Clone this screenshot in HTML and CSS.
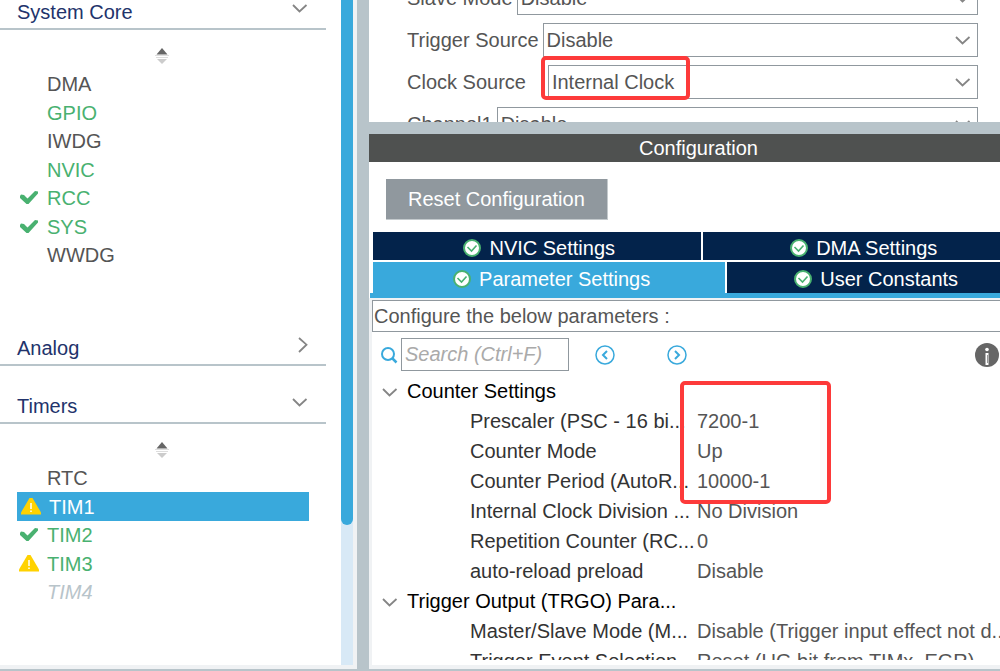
FILE: index.html
```html
<!DOCTYPE html>
<html lang="en">
<head>
    <meta charset="UTF-8">
    <meta name="viewport" content="width=device-width, initial-scale=1.0">
    <title>TIM1 Mode and Configuration</title>
    <link rel="stylesheet" href="styles.css">
</head>
<body>
    <!-- shared icons -->
    <svg class="sprite" width="0" height="0">
        <symbol id="down" viewBox="0 0 16 10">
            <path d="M1 1l6.500 6.500L14.500 1" fill="none" stroke="#858585" stroke-width="1.800"/>
        </symbol>
        <symbol id="right" viewBox="0 0 10 16">
            <path d="M1 1l7.500 6.700L1 15" fill="none" stroke="#858585" stroke-width="1.800"/>
        </symbol>
        <symbol id="sort" viewBox="0 0 14 16">
            <path d="M7 0l5.500 6.500h-11z" fill="#666"/>
            <path d="M0 7.500h14M1 9.500h12" stroke="#ddd"/>
            <path d="M7 16l5-5H2z" fill="#ccc"/>
        </symbol>
        <symbol id="check" viewBox="0 0 20 16">
            <path d="M1 6l1-1.500 3 .5 3.500 3.500L16 1l3 .5v2L9.500 14h-2L1 8z" fill="#49b170"/>
        </symbol>
        <symbol id="warn" viewBox="0 0 20 17">
            <path d="M8.500 0h3l8.500 14.500v2H0v-2z" fill="#ffd200"/>
            <path d="M10 5v6M10 12.500v1.500" stroke="#fff" stroke-width="1.500"/>
        </symbol>
        <symbol id="ok" viewBox="0 0 18 18">
            <circle cx="9" cy="9" r="8" fill="#fff" stroke="#49b170" stroke-width="2"/>
            <path d="M4.500 8l4 4 5-5.500" fill="none" stroke="#49b170" stroke-width="1.600"/>
        </symbol>
    </svg>

    <div class="page">
        <aside class="sidebar">
            <nav class="menu">
                <button class="section">System Core <svg width="16" height="10"><use href="#down"/></svg></button>
                <svg class="sort" width="14" height="16"><use href="#sort"/></svg>
                <ul class="list">
                    <li><a href="#">DMA</a></li>
                    <li><a href="#" class="green">GPIO</a></li>
                    <li><a href="#">IWDG</a></li>
                    <li><a href="#" class="green">NVIC</a></li>
                    <li><a href="#" class="green"><svg width="20" height="16"><use href="#check"/></svg>RCC</a></li>
                    <li><a href="#" class="green"><svg width="20" height="16"><use href="#check"/></svg>SYS</a></li>
                    <li><a href="#">WWDG</a></li>
                </ul>
                <button class="section analog">Analog <svg width="10" height="16"><use href="#right"/></svg></button>
                <button class="section timers">Timers <svg width="16" height="10"><use href="#down"/></svg></button>
                <svg class="sort" width="14" height="16"><use href="#sort"/></svg>
                <ul class="list">
                    <li><a href="#">RTC</a></li>
                    <li><a href="#" class="selected"><svg width="20" height="17"><use href="#warn"/></svg>TIM1</a></li>
                    <li><a href="#" class="green"><svg width="20" height="16"><use href="#check"/></svg>TIM2</a></li>
                    <li><a href="#" class="green"><svg width="20" height="17"><use href="#warn"/></svg>TIM3</a></li>
                    <li><a href="#" class="off">TIM4</a></li>
                </ul>
            </nav>
            <div class="scrollbar"><div class="thumb"></div></div>
        </aside>

        <main class="main">
            <section class="mode">
                <div class="field">
                    <label for="slave">Slave Mode</label>
                    <div class="combo"><select id="slave"><option>Disable</option></select></div>
                </div>
                <div class="field">
                    <label for="trigger">Trigger Source</label>
                    <div class="combo"><select id="trigger"><option>Disable</option></select></div>
                </div>
                <div class="field">
                    <label for="clock" class="spaced">Clock Source</label>
                    <div class="combo">
                        <select id="clock"><option>Internal Clock</option></select>
                        <div class="mark mark-clock"></div>
                    </div>
                </div>
                <div class="field">
                    <label for="channel1">Channel1</label>
                    <div class="combo"><select id="channel1"><option>Disable</option></select></div>
                </div>
            </section>

            <section class="config">
                <h2>Configuration</h2>
                <button class="reset">Reset Configuration</button>
                <div class="tabs">
                    <div class="tab-row">
                        <button class="tab"><svg width="18" height="18"><use href="#ok"/></svg>NVIC Settings</button>
                        <button class="tab"><svg width="18" height="18"><use href="#ok"/></svg>DMA Settings</button>
                    </div>
                    <div class="tab-row second">
                        <button class="tab active"><svg width="18" height="18"><use href="#ok"/></svg>Parameter Settings</button>
                        <button class="tab"><svg width="18" height="18"><use href="#ok"/></svg>User Constants</button>
                    </div>
                </div>
                <div class="content">
                    <p class="hint">Configure the below parameters :</p>
                    <div class="tools">
                        <label for="search" aria-label="Search">
                            <svg width="18" height="18" viewBox="0 0 18 18" fill="none" stroke="#39a9dc">
                                <circle cx="8" cy="8" r="6" stroke-width="2"/>
                                <path d="M12 12l4.500 4.500" stroke-width="2.500"/>
                            </svg>
                        </label>
                        <input type="text" id="search" placeholder="Search (Ctrl+F)">
                        <button class="step" aria-label="Previous">
                            <svg width="20" height="20" viewBox="0 0 20 20" fill="none" stroke="#39a9dc" stroke-width="1.500">
                                <circle cx="10" cy="10" r="9"/>
                                <path d="M12 6l-4 4 4 4" stroke-width="2"/>
                            </svg>
                        </button>
                        <button class="step next" aria-label="Next">
                            <svg width="20" height="20" viewBox="0 0 20 20" fill="none" stroke="#39a9dc" stroke-width="1.500">
                                <circle cx="10" cy="10" r="9"/>
                                <path d="M8 6l4 4-4 4" stroke-width="2"/>
                            </svg>
                        </button>
                        <button class="info" aria-label="Information">
                            <svg width="24" height="24" viewBox="0 0 24 24">
                                <circle cx="12" cy="12" r="12" fill="#666"/>
                                <circle cx="12" cy="6.500" r="1.800" fill="#fff"/>
                                <path d="M12 10v12" stroke="#fff" stroke-width="3"/>
                                <path d="M12.500 12v8" stroke="#999"/>
                            </svg>
                        </button>
                    </div>
                    <div class="params">
                        <table>
                            <tr class="group"><th colspan="2"><svg width="16" height="10"><use href="#down"/></svg>Counter Settings</th></tr>
                            <tr><td>Prescaler (PSC - 16 bi...</td><td>7200-1</td></tr>
                            <tr><td>Counter Mode</td><td>Up</td></tr>
                            <tr><td>Counter Period (AutoR...</td><td>10000-1</td></tr>
                            <tr><td>Internal Clock Division ...</td><td>No Division</td></tr>
                            <tr><td>Repetition Counter (RC...</td><td>0</td></tr>
                            <tr><td>auto-reload preload</td><td>Disable</td></tr>
                            <tr class="group"><th colspan="2"><svg width="16" height="10"><use href="#down"/></svg>Trigger Output (TRGO) Para...</th></tr>
                            <tr><td>Master/Slave Mode (M...</td><td>Disable (Trigger input effect not d...</td></tr>
                            <tr><td>Trigger Event Selection ...</td><td>Reset (UG bit from TIMx_EGR)</td></tr>
                        </table>
                        <div class="mark mark-params"></div>
                    </div>
                </div>
            </section>
        </main>
    </div>
</body>
</html>
```
FILE: styles.css
```css
* {
    box-sizing: border-box;
}

body {
    margin: 0;
    background-color: #b8c4ca;
    color: #555;
    font-family: "Liberation Sans", Arial, sans-serif;
    font-size: 20px;
    line-height: 24px;
}

button, select, input {
    margin: 0;
    padding: 0;
    border: 0;
    border-radius: 0;
    background: none;
    color: inherit;
    font: inherit;
}

svg {
    flex: none;
    display: block;
}

.sprite {
    position: absolute;
}

.page {
    display: grid;
    grid-template-columns: 357px 1fr;
    gap: 12px;
    height: 100vh;
    padding-bottom: 2px;
    overflow: hidden;
}

/* left side */
.sidebar {
    display: flex;
    min-height: 0;
    border-right: 4px solid #f0f2f4;
    border-bottom: 4px solid #f0f2f4;
    background-color: #fff;
}

.menu {
    flex: 1;
    overflow: hidden;
    padding-right: 15px;
}

.section {
    display: flex;
    align-items: center;
    justify-content: space-between;
    width: 100%;
    height: 34px;
    padding: 0 18px 0 17px;
    border-bottom: 2px solid #b8c4ca;
    color: #22336b;
}

.section svg {
    margin-bottom: 6px;
}

/* the list is scrolled a little past its first title */
.section:first-child {
    margin-top: -4px;
}

.analog {
    margin-top: 63px;
}

.timers {
    margin-top: 24px;
}

.sort {
    margin: 18px auto 6px 155px;
}

.list {
    display: grid;
    grid-auto-rows: 28px 29px;
    margin: 0;
    padding: 0 17px;
    list-style: none;
}

.list a {
    display: flex;
    align-items: center;
    height: 100%;
    padding-left: 30px;
    color: #555;
    text-decoration: none;
}

.list svg {
    margin: 0 8px 0 -28px;
}

.list .green {
    color: #49b170;
}

.list .off {
    color: #b8c4ca;
    font-style: italic;
}

.list .selected {
    padding-left: 32px;
    background-color: #39a9dc;
    color: #fff;
}

.scrollbar {
    width: 12px;
    background-color: #d8e9f6;
}

.thumb {
    height: 79%;
    border-radius: 0 0 6px 6px;
    background-color: #39a9dc;
}

/* right side */
.main {
    display: grid;
    grid-template-rows: 122px 1fr;
    gap: 12px;
    min-width: 0;
    min-height: 0;
    overflow: hidden;
}

.mode {
    display: flex;
    flex-direction: column;
    gap: 8px;
    overflow: hidden;
    padding: 0 22px 0 38px;
    background-color: #fff;
}

.field {
    display: flex;
    flex: none;
    align-items: center;
    gap: 4px;
}

.field:first-child {
    margin-top: -19px;
}

.spaced {
    padding-right: 18px;
}

.combo {
    position: relative;
    flex: 1;
}

.combo select {
    display: block;
    width: 100%;
    height: 34px;
    padding-left: 3px;
    border: 1px solid #90989e;
    appearance: none;
    background: url("data:image/svg+xml,%3Csvg xmlns='http://www.w3.org/2000/svg' width='16' height='10'%3E%3Cpath d='M1 2l6.500 6.500L14.500 2' fill='none' stroke='%23858585' stroke-width='1.800'/%3E%3C/svg%3E") no-repeat right 6px center;
}

.mark {
    position: absolute;
    border: 4px solid #fd3a3a;
    border-radius: 5px;
    pointer-events: none;
}

.mark-clock {
    top: -9px;
    left: -7px;
    width: 149px;
    height: 44px;
}

/* the panel is wider than the window and runs out on the right */
.config {
    display: flex;
    flex-direction: column;
    min-height: 0;
    margin-right: -28px;
    background-color: #fff;
}

.config h2 {
    margin: 0;
    background-color: #4f5150;
    color: #fff;
    font-size: 20px;
    font-weight: normal;
    line-height: 28px;
    text-align: center;
}

.reset {
    align-self: flex-start;
    margin: 17px 17px 12px;
    padding: 8px 22px;
    border-right: 1px solid #c4cacd;
    border-bottom: 1px solid #c4cacd;
    background-color: #90989e;
    color: #fff;
}

.tabs {
    display: flex;
    flex-direction: column;
    gap: 2px;
    margin-left: 1px;
    border-bottom: 5px solid #39a9dc;
}

.tab-row {
    display: flex;
    gap: 2px;
    height: 28px;
    margin: 0 3px;
}

.second {
    height: 31px;
}

.tab {
    display: flex;
    flex: 1;
    align-items: center;
    justify-content: center;
    gap: 8px;
    padding-top: 3px;
    background-color: #03234b;
    color: #fff;
}

.tab:first-child {
    padding-left: 5px;
}

.second .tab {
    flex: 6;
}

.second .active {
    flex: 7;
    background-color: #39a9dc;
}

.content {
    display: flex;
    flex: 1;
    flex-direction: column;
    min-height: 0;
    padding-bottom: 5px;
    border: 3px solid #f0f2f4;
    border-width: 2px 0 4px 3px;
}

.hint {
    margin: 0;
    padding: 4px 1px;
    border: 1px solid #90989e;
    line-height: 22px;
}

.tools {
    display: flex;
    align-items: center;
    padding: 6px 29px 5px 8px;
}

.tools input {
    width: 168px;
    height: 33px;
    margin: 0 26px 0 3px;
    padding: 0 3px;
    border: 1px solid #90989e;
}

.tools input::placeholder {
    color: #aaa;
    font-style: italic;
    opacity: 1;
}

.next {
    margin-left: 52px;
}

.info {
    margin-left: auto;
}

.params {
    position: relative;
    flex: 1;
    min-height: 0;
    overflow: hidden;
}

.params table {
    border-collapse: collapse;
    white-space: nowrap;
}

.params td {
    height: 30px;
    padding: 0;
}

.params td:first-child {
    width: 325px;
    max-width: 325px;
    padding-left: 98px;
    color: #333;
}

.group th {
    height: 30px;
    padding: 0;
    color: #000;
    font-weight: normal;
    text-align: left;
}

.group svg {
    display: inline-block;
    margin: 0 9px 0 10px;
    vertical-align: middle;
}

.mark-params {
    top: 5px;
    left: 308px;
    width: 151px;
    height: 123px;
}
```
